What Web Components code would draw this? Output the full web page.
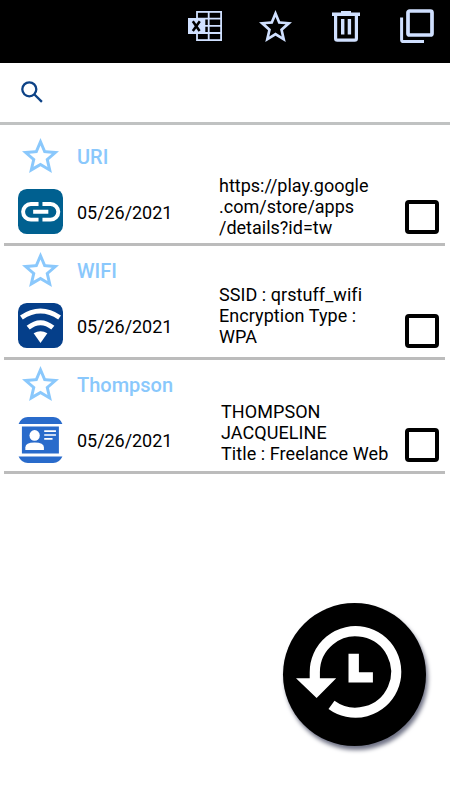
<!DOCTYPE html>
<html lang="en">
<head>
<meta charset="utf-8">
<meta name="viewport" content="width=device-width, initial-scale=1">
<title>History</title>
<style>
  body {
    margin: 0;
    background: #fff;
    font-family: Roboto, "Liberation Sans", sans-serif;
    color: #000;
  }
</style>
</head>
<body>
<history-screen></history-screen>

<script>
const icons = {
  excel: `<svg width="34" height="30" viewBox="0 0 34 30">
      <g fill="none" stroke="currentColor" stroke-width="1.800">
        <rect x="9" y=".9" width="24.100" height="28.200"/>
        <path d="M20.700 1v28M9 7.600h24M16 14.800h17M9 22h24"/>
      </g>
      <path fill="currentColor" d="M0 7h17.300v16H0z"/>
      <path fill="none" stroke="#000" stroke-width="2.500" d="M4.800 10.300l6.800 9.700M11.800 10.300L4.800 20"/>
    </svg>`,
  star: `<svg width="33" height="32" viewBox="2 2 20 19" preserveAspectRatio="none">
      <path fill="currentColor" d="M22 9.240l-7.190-.62L12 2 9.190 8.630 2 9.240l5.460 4.730L5.820 21 12 17.270 18.180 21l-1.630-7.030L22 9.240zM12 15.400l-3.760 2.270 1-4.280-3.320-2.880 4.380-.38L12 6.100l1.710 4.040 4.380.38-3.320 2.880 1 4.280L12 15.400z"/>
    </svg>`,
  trash: `<svg width="28" height="31" viewBox="0 0 28 31">
      <path fill="currentColor" d="M0 1.500h9V0h10v1.500h9V5H0z"/>
      <path fill="none" stroke="currentColor" stroke-width="3.200" d="M3.600 4v23.500q0 1.700 1.700 1.700h17.400q1.700 0 1.700-1.700V4"/>
      <path fill="none" stroke="currentColor" stroke-width="3.400" d="M10.700 8v15.500M17.400 8v15.500"/>
    </svg>`,
  copy: `<svg width="34" height="35" viewBox="0 0 34 35">
      <rect x="8" y="2" width="24" height="24" rx="1.600" fill="none" stroke="currentColor" stroke-width="3.700"/>
      <path fill="none" stroke="currentColor" stroke-width="3" d="M1.600 8.500v22.200q0 1.900 1.900 1.900h20.500"/>
    </svg>`,
  search: `<svg width="22" height="22" viewBox="0 0 22 22">
      <g fill="none" stroke="currentColor" stroke-width="2.300">
        <circle cx="8.300" cy="8.300" r="7"/>
        <path d="M13.200 13.200l7.700 7.700"/>
      </g>
    </svg>`,
  link: `<svg width="45" height="45" viewBox="0 0 46 46">
      <rect width="46" height="46" rx="9" fill="#006090"/>
      <path fill="none" stroke="#fff" stroke-width="4" d="M21 15.300h-7.800a8 8 0 0 0 0 16H21M25 15.300h8.200a8 8 0 0 1 0 16H25M15.500 23.300h15.500"/>
    </svg>`,
  wifi: `<svg width="45" height="45" viewBox="0 0 46 46">
      <rect width="46" height="46" rx="9" fill="#053f8a"/>
      <g fill="none" stroke="#fff" stroke-width="5">
        <path d="M3.500 14.800Q23 1.600 42.500 14.800"/>
        <path d="M10.400 25.200Q23 15 35.600 25.200"/>
      </g>
      <path fill="#fff" d="M16 31Q23 26.500 30 31L23 40.900z"/>
    </svg>`,
  contact: `<svg width="45" height="46" viewBox="0 0 46 46" preserveAspectRatio="none">
      <path fill="#296bcb" d="M.6 7Q3.500 0 10 0h26q6.500 0 9.400 7zM.6 39.600Q3.500 46 10 46h26q6.500 0 9.400-6.400zM4 9.500h37.800v26.900H4z"/>
      <g fill="#fff">
        <circle cx="17" cy="18.400" r="5.300"/>
        <path d="M7.500 33v-2.500q0-5 9.500-5t9.500 5V33z"/>
        <path d="M26.800 13.300h12v1.600h-12zM26.800 17.200h12v1.600h-12zM26.800 21.100h8.500v1.600h-8.500z"/>
      </g>
    </svg>`,
  history: `<svg width="143" height="143" viewBox="0 0 143 143">
      <path fill="none" stroke="#fff" stroke-width="10.200" d="M31.800 76V69.200A40.700 40.700 0 1 1 48.500 101.800"/>
      <path fill="#fff" d="M13 75.200h40.200L33.600 95zM65.500 50.700h10.400v18.600h14v10.200H65.500z"/>
    </svg>`,
};

class AppIcon extends HTMLElement {
  constructor() {
    super();
    this.attachShadow({ mode: "open" });
  }

  connectedCallback() {
    this.shadowRoot.innerHTML = `
      <style>
        :host { display: block; flex: none; }
        svg { display: block; width: var(--icon-width); height: var(--icon-height); }
      </style>
      ${icons[this.getAttribute("name")]}
    `;
  }
}
customElements.define("app-icon", AppIcon);

class ActionBar extends HTMLElement {
  constructor() {
    super();
    this.attachShadow({ mode: "open" });
    this.shadowRoot.innerHTML = `
      <style>
        :host {
          display: flex;
          justify-content: flex-end;
          gap: 38px;
          height: 63px;
          padding: 9px 16px 0 0;
          box-sizing: border-box;
          background: #000;
          color: #d0e0ff;
        }
        app-icon { margin-top: 2px; }
        app-icon[name="excel"] { margin-right: -1px; }
        app-icon[name="star"] { margin-top: 1px; }
        app-icon[name="trash"] { margin-left: 2px; margin-right: 2px; }
        app-icon[name="copy"] { margin-top: 0; }
      </style>
      <app-icon name="excel"></app-icon>
      <app-icon name="star"></app-icon>
      <app-icon name="trash"></app-icon>
      <app-icon name="copy"></app-icon>
    `;
  }
}
customElements.define("action-bar", ActionBar);

class SearchBar extends HTMLElement {
  constructor() {
    super();
    this.attachShadow({ mode: "open" });
    this.shadowRoot.innerHTML = `
      <style>
        :host {
          display: flex;
          align-items: center;
          height: 62px;
          padding: 0 21px 2px;
          box-sizing: border-box;
          border-bottom: 3px solid #c0c2c2;
          color: #0d4286;
        }
      </style>
      <app-icon name="search"></app-icon>
    `;
  }
}
customElements.define("search-bar", SearchBar);

class CheckBox extends HTMLElement {
  constructor() {
    super();
    this.attachShadow({ mode: "open" });
    this.shadowRoot.innerHTML = `
      <style>
        :host {
          display: block;
          width: 34px;
          height: 34px;
          box-sizing: border-box;
          border: 4px solid #000;
          border-radius: 4px;
        }
      </style>
    `;
    this.addEventListener("click", () => this.toggleAttribute("checked"));
  }
}
customElements.define("check-box", CheckBox);

class HistoryItem extends HTMLElement {
  constructor() {
    super();
    this.attachShadow({ mode: "open" });
  }

  connectedCallback() {
    this.shadowRoot.innerHTML = `
      <style>
        :host {
          display: grid;
          grid-template-columns: 59px var(--text-offset, 142px) 1fr 34px;
          height: 114px;
          margin: 0 5px 0 4px;
          padding: 0 6px 0 14px;
          box-sizing: border-box;
          border-bottom: 3px solid #bcbcbc;
        }
        app-icon[name="star"] {
          --icon-width: 37px;
          --icon-height: 35px;
          margin: 6px 0 16px 4px;
          color: #8ac8fc;
        }
        .title {
          margin-top: 13px;
          font-size: 20px;
          font-weight: 500;
          line-height: 24px;
          color: #8ac8fc;
        }
        .date {
          margin-top: 33px;
          font-size: 18px;
          line-height: 22px;
          letter-spacing: -.05px;
        }
        .content {
          margin-top: var(--content-top, 43px);
          font-size: 18px;
          line-height: 21px;
          letter-spacing: var(--content-spacing, 0);
          white-space: nowrap;
        }
        check-box { margin-top: 68px; }
      </style>
      <div>
        <app-icon name="star"></app-icon>
        <app-icon name="${this.getAttribute("type")}"></app-icon>
      </div>
      <div>
        <div class="title">${this.getAttribute("label")}</div>
        <div class="date">${this.getAttribute("date")}</div>
      </div>
      <div class="content"><slot></slot></div>
      <check-box></check-box>
    `;
  }
}
customElements.define("history-item", HistoryItem);

class HistoryButton extends HTMLElement {
  constructor() {
    super();
    this.attachShadow({ mode: "open" });
    this.shadowRoot.innerHTML = `
      <style>
        :host {
          display: block;
          width: 143px;
          height: 143px;
          border-radius: 50%;
          background: #000;
          box-shadow: 2px 4px 4px #707386;
        }
      </style>
      <app-icon name="history"></app-icon>
    `;
  }
}
customElements.define("history-button", HistoryButton);

class HistoryScreen extends HTMLElement {
  constructor() {
    super();
    this.attachShadow({ mode: "open" });
    this.shadowRoot.innerHTML = `
      <style>
        :host {
          display: flex;
          flex-direction: column;
          position: relative;
          height: 800px;
          overflow: hidden;
        }
        .list { padding-top: 7px; }
        .wifi { --content-top: 38px; --content-spacing: .06px; }
        .contact { --text-offset: 144px; --content-top: 41px; --content-spacing: .07px; }
        history-button {
          position: absolute;
          right: 24px;
          bottom: 54px;
        }
      </style>
      <action-bar></action-bar>
      <search-bar></search-bar>
      <div class="list">
        <history-item type="link" label="URI" date="05/26/2021">https://play.google<br>.com/store/apps<br>/details?id=tw</history-item>
        <history-item class="wifi" type="wifi" label="WIFI" date="05/26/2021">SSID : qrstuff_wifi<br>Encryption Type :<br>WPA</history-item>
        <history-item class="contact" type="contact" label="Thompson" date="05/26/2021">THOMPSON<br>JACQUELINE<br>Title : Freelance Web</history-item>
      </div>
      <history-button></history-button>
    `;
  }
}
customElements.define("history-screen", HistoryScreen);
</script>
</body>
</html>
